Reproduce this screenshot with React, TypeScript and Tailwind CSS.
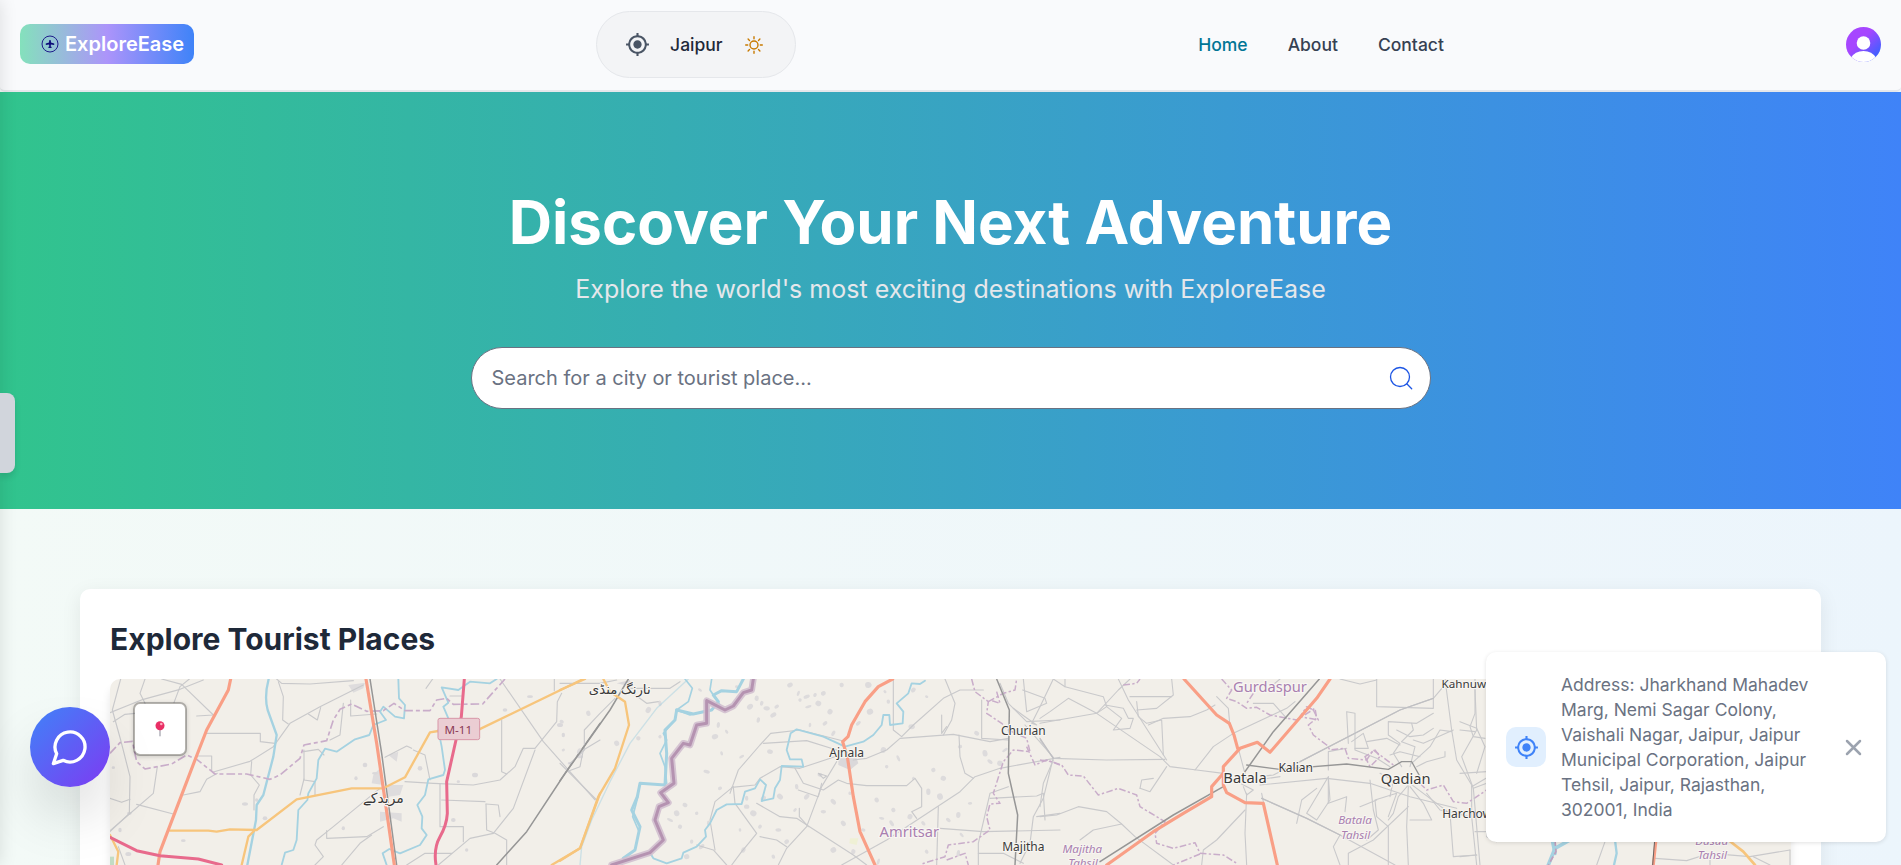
import React from "react";
import { MdMyLocation } from "react-icons/md";

type Pt = [number, number];

const MINOR = "#c9c9cb";
const ROAD = "#bfbfc2";
const WATER = "#a5d2e1";
const TRUNK = "#f99f86";
const PRIMARY = "#f7c57c";
const MOTORWAY = "#e86a8c";
const RAIL = "#969696";
const ADMIN = "#c9adca";

const westMinor = [
  "M62 27L37 120L62 210L90 320L88 430L30 485", "M30 128L130 88L240 58L310 30", "M135 27L120 70L135 100", "M185 27L245 43L340 135L290 138",
  "M268 27L240 50L222 98", "M40 155L75 133L105 130", "M316 190H481V215L525 220", "M290 258H335V303", "M340 306L450 274L520 230L570 160L660 110L790 45",
  "M530 27L545 40L630 42L760 32", "M535 35L550 80L548 150L565 162", "M625 132L652 150L662 113", "M752 90V138L830 132", "M730 100L720 195L690 210",
  "M455 275L452 315L478 345L462 375V420", "M30 385L65 397L90 388", "M30 482L85 435L160 370L172 290", "M110 403L220 432", "M250 375L300 365L320 328L352 310",
  "M610 245L655 238L672 255", "M612 240V330L645 335V375", "M612 327L600 375", "M645 585L670 560L645 525L650 510L700 470L840 355",
  "M855 262L920 228L935 235", "M940 240L975 255L990 330", "M915 335L1000 340L1120 345L1200 330L1245 290L1270 235H1305L1370 155L1372 95L1385 70",
  "M1205 150V305L1220 312", "M1305 240L1240 415L1180 490L1110 505L1015 585", "M1158 402L1160 480L1185 490L1220 510V585", "M1158 402L1195 405L1200 440",
  "M1200 27L1330 215L1485 390", "M1020 342V470L1060 470H1090V515", "M1025 390L1155 395", "M680 482V505L800 500L850 470", "M920 585L975 550H1055",
  "M1363 27V62", "M55 530L75 585", "M725 585L780 520L815 495", "M1500 210L1450 240L1440 290L1400 305",
  "M978 55L998 27", "M1050 78H1085",
];

const middleMinor = [
  "M0 40H120L170 30", "M165 85L120 130L73 180V240L30 280", "M205 55H330L360 35", "M205 60L260 100L295 95", "M0 280L110 390",
  "M510 370L535 300L600 225L632 190L720 180L850 213", "M610 220L740 212L830 240", "M515 352L585 345L600 325L660 290L720 295L840 255", "M520 352L525 400L590 490L570 515L545 545L515 585",
  "M520 350L465 395L450 450L465 540", "M705 295L730 340L790 360L835 330L860 340L920 347H1040L1065 325L1085 355V410L1055 425L1070 445", "M715 360L775 380L785 340",
  "M830 275L785 350L740 470L680 535L655 585", "M590 400L660 440L710 445L745 468L880 555L920 585", "M718 415V440L745 470", "M880 270L920 265L980 240L1020 205L1180 193L1290 215L1345 205",
  "M1000 30V180L1025 200L1060 165L1150 85L1200 60H1270", "M1155 27L1185 100L1175 150L1150 195", "M1145 135V190L1160 170", "M1265 90V205L1345 210", "M1197 195L1200 260L1215 310L1240 325",
  "M845 585L980 510L1200 365L1245 320L1320 295L1500 262", "M1135 410L1130 585", "M1140 475L1270 485L1500 480", "M1290 385L1430 378L1450 370L1455 450", "M1345 350L1290 370L1255 520V585",
  "M1320 40L1345 100L1400 155L1500 150", "M1360 115L1395 140L1430 165L1415 160L1440 110L1480 27", "M1390 27L1400 125L1460 100L1455 85L1388 60", "M1395 165L1480 262L1450 385L1420 440L1410 520L1380 580",
  "M1255 550H1330L1390 580", "M600 500L650 510L680 530", "M410 525L460 540L500 585", "M1430 440L1500 430", "M775 310L800 318L790 325Z",
];

const eastMinor = [
  "M0 160L170 130L200 110L190 80L75 50V27", "M75 50L40 27", "M170 130L85 85L30 125L0 145", "M170 130L360 260L390 290L470 300L550 310", "M170 130L235 60L270 27",
  "M235 27L265 90L380 270", "M195 105L250 115L265 145H280L270 175L220 180L245 145L200 110", "M290 120L350 115L400 75L395 27", "M270 80H395", "M290 95L295 140L320 160L365 150L370 255", "M325 165L370 145L450 140L500 120L525 105",
  "M40 265L200 270L375 268", "M40 265L0 210", "M40 270L10 340L0 410", "M300 355L330 365L380 290", "M465 300L520 230L580 190L740 115L765 95", "M570 170L565 115L530 80", "M640 100L700 100L740 145",
  "M595 235L620 330", "M660 320L700 315L780 275L1080 120L1180 85L1210 50", "M660 345L860 325L990 340L1110 380L1250 415", "M665 370L670 395", "M665 385L800 445L900 495L1065 585", "M650 330L720 320",
  "M620 370L615 490L620 585", "M615 420L530 510L490 540L485 585", "M0 440L50 435L115 410L200 425L245 462L285 500L400 585", "M245 462L160 480L120 510", "M300 355L305 330L340 325",
  "M865 320L800 430L830 450L870 390L865 320", "M830 355L785 390L770 460", "M865 325V400L920 380L915 425", "M1010 27V110L1180 115V27", "M1045 585V470L1010 440L1005 390L1070 370L1045 440",
  "M1105 350L1100 470L1105 585", "M1105 345L1075 380L1060 430L1045 450", "M1110 350L1150 400L1175 450H1110", "M1110 340L1230 430L1240 560L1310 555", "M925 585V550L1000 510L1105 410", "M900 495L880 530L900 585",
  "M1050 290L1010 265L945 240V130L920 125L925 220", "M945 235H985L970 190L935 215", "M1085 290L1060 250L1080 220L1045 195V155L1130 160L1180 130", "M1110 290L1125 230L1085 215", "M1115 280L1170 230L1200 180L1235 185", "M1130 290L1160 275L1215 260V245", "M1085 215L1120 180L1115 160", "M1050 255L1080 245L1140 260", "M1070 180L1110 200L1150 195L1180 175",
  "M1215 27L1235 180L1250 270L1295 345V440L1310 585", "M1240 180L1150 220L1120 210", "M1305 27V130L1290 170L1300 200L1335 205", "M1295 350L1380 300", "M900 27L960 42L1010 30", "M990 330L1000 420L1015 480L980 510", "M865 300V245L920 235", "M960 410L1010 390", "M1160 370L1200 420L1290 440", "M600 340L640 360L620 375L610 350",
  "M680 60L720 27", "M980 215L1040 205L1080 225", "M1020 310L1060 330L1050 380",
];

const farMinor = [
  "M45 150L50 270L5 350L40 445L60 675", "M0 245L50 265L75 320L50 400", "M0 270L45 275", "M0 400L80 395", "M40 445L80 430", "M45 575H80V590L110 605", "M0 650L50 645",
  "M435 605L410 675", "M585 655L680 662L750 640L870 650L990 630", "M750 650V675", "M990 630V675", "M880 650L930 675",
];

const smudges: Pt[] = [
  [530,50],[560,65],[590,85],[570,110],[475,165],[500,185],[595,150],[640,135],[605,100],[690,45],[715,70],[740,80],[765,75],[790,70],[775,100],[745,110],[720,90],[845,45],[810,125],[925,45],
  [975,65],[985,95],[1060,60],[1055,170],[895,160],[750,165],[795,160],[620,115],[650,110],[630,245],[545,260],[440,305],[480,355],[375,405],[350,430],[330,450],[410,430],[360,470],[380,560],
  [580,430],[540,480],[600,470],[560,410],[660,380],[655,480],[705,420],[790,425],[820,395],[780,315],[850,460],[965,445],[995,460],[910,480],[950,390],[970,240],[1015,265],[980,290],[1120,300],
  [1150,325],[1140,380],[1060,325],[1200,230],[1250,190],[1275,250],[1290,275],[1230,400],[1165,450],[1105,365],[1090,460],[1195,435],[1205,495],[1195,550],[1100,545],[880,545],[820,540],[955,575],
  [300,200],[235,205],[170,220],[60,245],[10,240],[5,155],[85,130],[265,120],[300,100],[420,60],[710,350],[740,380],[560,385],[610,385],[445,460],[425,530],[395,515],[680,515],[1320,280],[1335,240],
  [870,370],[1000,420],[1050,440],[930,125],[1100,80],[640,560],[550,540],[465,200],[820,190],[485,250],
];

const smallSmudges: Pt[] = [
  [40,293],[88,430],[85,552],[60,480],[250,512],[435,402],[768,325],[795,285],[825,310],[470,390],[495,445],[1125,315],[1075,335],[1215,120],[1380,165],[1390,195],[1410,280],[1440,260],[730,475],[960,295],[1290,80],[1100,540],[1060,450],
];

function Lines({ d, color, width, dash, opacity = 1 }: { d: string[]; color: string; width: number; dash?: string; opacity?: number }) {
  return (
    <g fill="none" stroke={color} strokeWidth={width} strokeDasharray={dash} strokeLinejoin="round" strokeLinecap={dash ? "butt" : "round"} opacity={opacity}>
      {d.map((p, i) => (
        <path key={i} d={p} />
      ))}
    </g>
  );
}

function Place({ x, y, size, children, color = "#3a3a3a", italic = false }: { x: number; y: number; size: number; children: React.ReactNode; color?: string; italic?: boolean }) {
  return (
    <text x={x} y={y} fontSize={size} fill={color} textAnchor="middle" fontStyle={italic ? "italic" : "normal"} stroke="#f8f6f2" strokeWidth={size * 0.16} strokeLinejoin="round" paintOrder="stroke">
      {children}
    </text>
  );
}

function TouristMap() {
  return (
    <svg className="block h-full w-full" viewBox="110 679 1681 186" fontFamily="'Noto Sans', 'DejaVu Sans', sans-serif">
      <rect x="110" y="679" width="1681" height="186" fill="#f2efe9" />

      <g transform="translate(100 670) scale(.33333)">
        <path d="M745 45L795 38L790 55L760 68ZM820 315L840 295L850 345L815 340ZM862 345L910 345L900 375L865 380ZM840 425L905 430V455L880 445L840 455ZM865 255L895 245L890 275Z" fill="#dedcdd" />
        <g fill="#dad8da">{smallSmudges.map(([x, y], i) => <ellipse key={i} cx={x} cy={y} rx={5 + (i % 3) * 2} ry={4 + (i % 4)} />)}</g>
        <Lines d={westMinor} color={MINOR} width={3.4} />
        <Lines color={WATER} width={7} d={["M506 27Q492 80 503 120L530 195L520 260L490 375L470 405L468 450L442 585"]} />
        <Lines color={WATER} width={5.5} d={["M895 27L897 85L915 105L912 145L885 140L850 110L840 125L858 150L820 165L808 195L765 208L710 245L675 236L655 270L650 325L625 370L622 390L595 420L590 510L580 540L555 548L545 585", "M1190 27L1170 40L1110 35L1075 60L1025 52L1045 98L1030 110L1045 145L1015 180L1025 230L1035 300L1030 315L985 328L975 375L952 405L967 440L965 475L980 495L960 525L900 550L868 537L848 550L860 585"]} />
        <Lines color={ADMIN} width={5} dash="26 9 12 9" d={["M30 250L60 218L97 214L110 275L135 297L215 282L260 255L290 268L345 312L440 312L510 328L540 315L600 265L612 225L680 212L700 150L720 118L755 102L800 124L850 122L882 100L915 122H990L1010 90L1040 85L1060 103L1148 102L1215 27"]} />
        <Lines color={RAIL} width={4.5} d={["M810 27L845 250L890 585", "M1500 160L1400 303L1280 485L1190 585"]} />
        <Lines color={PRIMARY} width={7} d={["M210 482H325L350 485L390 478L470 480L590 388L755 355H850L915 322L990 187L1015 183L1130 182L1450 27", "M465 480L445 500L425 585", "M30 495L55 545L50 585", "M1500 370L1440 535L1355 585"]} />
        <Lines color={TRUNK} width={9.5} d={["M392 27L385 60L320 180L285 270L180 545L174 585", "M798 27L830 220L855 390L883 585"]} />
        <Lines color={MOTORWAY} width={9} d={["M30 502L110 542L180 557L295 567L365 585", "M1093 27L1084 140L1068 210L1040 335L1042 430Q1040 465 1020 500T1008 585"]} />
        <rect x="1014" y="145" width="125" height="64" rx="6" fill="#ebcdd3" stroke="#d897a8" strokeWidth="3" />
        <text x="1075" y="192" fontSize="35" fill="#8a3853" textAnchor="middle">M-11</text>
        <Place x={850} y={398} size={42}>مریدکے</Place>
        <path d="M30 560H42V585H30Z" fill="#c2dcc4" />
      </g>

      <g transform="translate(560 670) scale(.33333)">
        <path d="M835 265H890L895 280L870 300L835 285Z M170 40L210 30L215 50Z" fill="#dad8da" />
        <g fill="#dddbdc">
          {smudges.map(([x, y], i) => (
            <ellipse key={i} cx={x} cy={y} rx={5 + (i % 4) * 1.6} ry={4 + (i % 5) * 1.2} transform={`rotate(${(i * 47) % 180} ${x} ${y})`} />
          ))}
        </g>
        <path d="M870 505H895L890 525L868 520Z" fill="#eff0d5" />
        <Lines d={middleMinor} color={MINOR} width={3.4} />
        <Lines color={WATER} width={4} opacity={0.5} d={["M385 27L290 115L210 220L150 335L95 450L65 530L60 585"]} />
        <Lines color={WATER} width={9} d={["M350 120L345 150L315 180L320 250L315 345L240 340L232 380L215 420L240 470L225 540L190 565", "M350 120L400 132L455 120L475 95L460 75L485 62L530 65L550 27"]} />
        <Lines color={WATER} width={5} d={["M375 27L397 55L385 95L350 120L390 135L430 125", "M455 27L450 60L480 105", "M345 150L310 190L320 210L300 250L315 290L320 340", "M235 375L218 440L235 480"]} />
        <Lines color={WATER} width={5.5} d={["M1095 32L1080 42L1055 40L1045 70L1010 100L1030 125L1028 160L990 165L988 135L970 135L965 165L940 195L910 215L855 230L790 200L710 178L692 190L680 240L690 268L725 268L730 290L665 288L660 330L645 355L640 385L605 393L618 345L600 328L585 355L555 365L545 402L500 403L470 420L450 460L435 480L438 500L410 530L370 548L365 565L320 580L280 565L270 548"]} />
        <Lines color="#d2bfcf" width={20} opacity={0.9} d={["M580 27L575 60L550 68L520 108L495 120L440 92V160L410 165L390 225L370 220L335 265L342 340L302 368L325 398L297 410L285 450L310 510L270 548L155 585"]} />
        <Lines color="#b593b1" width={9} d={["M580 27L575 60L550 68L520 108L495 120L440 92V160L410 165L390 225L370 220L335 265L342 340L302 368L325 398L297 410L285 450L310 510L270 548L155 585"]} />
        <Lines color={ADMIN} width={4.5} dash="20 7 7 7" d={["M1235 27L1245 65L1285 95L1280 130L1325 160L1345 180L1400 205L1410 245L1360 240L1330 275L1300 370L1320 400L1290 402L1280 440L1290 480L1240 515L1165 525L1155 560L1085 582", "M1285 95L1330 70L1365 60L1370 27", "M1310 65L1320 100L1290 90", "M1400 230L1425 285L1460 270L1500 285", "M1160 570L1215 550L1225 585"]} />
        <Lines color={RAIL} width={4.5} d={["M205 27L150 120L0 332", "M1310 27L1348 120L1345 310L1373 435L1365 585"]} />
        <Lines color={PRIMARY} width={7} d={["M0 60L75 27", "M130 27L150 65L195 95L207 165L165 295L115 380L60 535L0 572"]} />
        <Lines color={TRUNK} width={9.5} d={["M998 27L955 50L915 95L875 165L864 200L848 215L862 260L880 380L900 485L945 585"]} />
        <Place x={179} y={72} size={40}>نارنگ منڈی</Place>
        <Place x={860} y={262} size={36}>Ajnala</Place>
        <Place x={1390} y={195} size={36}>Churian</Place>
        <Place x={1048} y={502} size={44} color="#a97fb0">Amritsar</Place>
        <Place x={1390} y={543} size={36}>Majitha</Place>
      </g>

      <g transform="translate(1040 670) scale(.33333)">
        <Lines d={eastMinor} color={MINOR} width={3.3} />
        <Lines color={ROAD} width={3.8} d={["M40 265L0 205", "M665 385L800 445L900 495", "M780 275L1080 120L1180 85"]} />
        <Lines color={ADMIN} width={4.5} dash="20 7 7 7" d={["M0 270L35 275L65 285L85 315L130 318L175 375L235 355L290 375L300 410L375 455L345 490L350 520L400 535L465 518L480 550L550 555L590 580", "M480 552L400 585", "M545 27L575 60L560 85L590 95L620 115L650 112L690 135L770 150L825 115L830 145L805 165L820 195L860 225L870 240L915 235L925 265L980 270L1000 240L1060 285", "M250 45L290 40L300 27", "M640 70L620 100", "M820 120L835 150L780 140L800 110Z", "M975 260L990 290L1020 260L1005 240Z", "M1140 340L1160 360L1210 345L1240 395L1280 400L1340 360"]} />
        <Lines color={RAIL} width={4.5} d={["M838 27L700 185L615 305", "M550 350L400 435L180 575"]} />
        <Lines color={RAIL} width={3.8} d={["M620 285L720 298L920 282L1045 298L1085 275H1115L1140 320"]} />
        <Lines color={TRUNK} width={9.5} d={["M432 27L530 135L568 160L582 195L593 235", "M870 27L830 85L690 247L652 217L600 235L550 290V345L560 368L615 398L670 400L712 585", "M550 310L515 350V380L430 430L340 485L200 585"]} />
        <Place x={690} y={66} size={44} color="#a97fb0">Gurdaspur</Place>
        <Place x={615} y={339} size={44}>Batala</Place>
        <Place x={767} y={305} size={36}>Kalian</Place>
        <Place x={1097} y={343} size={44}>Qadian</Place>
        <Place x={1292} y={53} size={35}>Kahnuwan</Place>
        <Place x={1296} y={444} size={36}>Harchowal</Place>
        <Place x={945} y={462} size={35} color="#a97fb0" italic>Batala</Place>
        <Place x={947} y={506} size={35} color="#a97fb0" italic>Tahsil</Place>
        <Place x={127} y={548} size={35} color="#a97fb0" italic>Majitha</Place>
        <Place x={129} y={590} size={35} color="#a97fb0" italic>Tahsil</Place>
      </g>

      <g transform="translate(1460 640) scale(.33333)">
        <Lines d={farMinor} color={MINOR} width={3.4} />
        <Lines color={WATER} width={11} d={["M330 600L285 625L265 675", "M278 605L285 640"]} />
        <Lines color={WATER} width={7} d={["M465 600L470 640L462 675"]} />
        <Lines color="#bfa0bd" width={5} dash="18 8" d={["M285 600L288 635L265 675"]} />
        <Lines color={TRUNK} width={9} d={["M588 600L580 675"]} />
        <Lines color="#666" width={3} d={["M584 600L578 675"]} />
        <Lines color={PRIMARY} width={8} d={["M805 600L850 635L885 675"]} />
        <Place x={755} y={614} size={35} color="#a97fb0" italic>Dasua</Place>
        <Place x={757} y={658} size={35} color="#a97fb0" italic>Tahsil</Place>
      </g>
    </svg>
  );
}

function PinControl() {
  return (
    <button className="absolute top-[23px] left-[23px] flex h-[54px] w-[54px] items-center justify-center rounded-[7px] border-2 border-black/25 bg-white bg-clip-padding shadow-[0_1px_4px_rgba(0,0,0,0.15)]">
      <svg className="-mt-px h-4 w-[10px]" viewBox="0 0 10 16">
        <path d="M5 8V15.3" stroke="#8b8b98" strokeWidth="1" />
        <circle cx="5" cy="4.8" r="4.5" fill="#e92f65" />
        <circle cx="6.3" cy="3" r="1.3" fill="#ffa9be" />
      </svg>
    </button>
  );
}

function Header() {
  return (
    <header className="flex h-[92px] items-center justify-between rounded-b-[5px] border-b-2 border-gray-200 bg-[#f9fafc] px-5">
      <a className="-mt-[3px] flex h-10 w-[174px] items-center rounded-[10px] bg-linear-to-r/srgb from-[#84e1bc] via-[#ac94fa] to-[#3f83f8] pl-[21px]">
        <svg className="h-[18px] w-[18px] shrink-0" viewBox="0 0 18 18">
          <circle cx="9" cy="9" r="8" fill="none" stroke="#1e1b8b" strokeWidth="1" />
          <path d="M9 5c.6 0 .9.6.9 1.300v1.100l3.300 1.200v1.300l-3.300-.3-.2 1.800 1 .6v.7L9 12.900l-1.700-.2v-.7l1-.6-.2-1.800-3.300.3V8.600l3.300-1.200V6.300C8.100 5.600 8.400 5 9 5z" fill="#0b0b78" />
        </svg>
        <span className="ml-[6px] text-[20px] leading-7 font-semibold text-white">ExploreEase</span>
      </a>

      <div className="-mt-px flex h-[67px] w-[200px] items-center rounded-full border border-gray-200 bg-gray-100 pl-7">
        <MdMyLocation className="h-[25px] w-[25px] text-gray-600" />
        <span className="mt-px ml-5 w-[54px] text-[17.5px] font-medium text-gray-800">Jaipur</span>
        <svg className="ml-[21px] h-[18px] w-[18px]" viewBox="0 0 18 18" fill="none" stroke="#c87a00" strokeWidth="1.4" strokeLinecap="round">
          <circle cx="9" cy="9" r="4" />
          <path d="M9 .7v2M9 15.300v2M.7 9h2M15.300 9h2M3.100 3.100l1.400 1.400M13.500 13.500l1.400 1.400M3.100 14.900l1.400-1.400M13.500 4.500l1.400-1.400" />
        </svg>
      </div>

      <nav className="-mt-[2px] flex gap-10 text-[17.5px] leading-[25px] font-medium text-gray-700">
        <a className="text-cyan-700">Home</a>
        <a>About</a>
        <a>Contact</a>
      </nav>

      <svg className="-mt-px h-[35px] w-[35px]" viewBox="0 0 35 35">
        <defs>
          <linearGradient id="avatar" x1="0" y1="0" x2="1" y2="1">
            <stop offset=".4" stopColor="#a646ff" />
            <stop offset=".85" stopColor="#3f5fff" />
          </linearGradient>
          <clipPath id="avatarClip"><circle cx="17.500" cy="17.500" r="17.500" /></clipPath>
        </defs>
        <g clipPath="url(#avatarClip)">
          <rect width="35" height="35" fill="url(#avatar)" />
          <circle cx="17.500" cy="16" r="6.800" fill="#fff" />
          <path d="M4.700 31Q9 24 17.500 24T30.300 31V35H4.700Z" fill="#fff" />
        </g>
      </svg>
    </header>
  );
}

function Hero() {
  return (
    <section className="flex h-[417px] flex-col items-center bg-linear-to-r/srgb from-[#31c48d] to-[#3f83f8] pt-[100px]">
      <h1 className="text-[60px] leading-[60px] font-bold text-white">Discover Your Next Adventure</h1>
      <p className="mt-5 text-[25px] leading-[35px] text-gray-200">Explore the world's most exciting destinations with ExploreEase</p>
      <div className="mt-10 flex h-[62px] w-[960px] items-center justify-between rounded-full border border-gray-500 bg-white pr-[17px] pl-5">
        <span className="text-[20px] leading-[30px] text-gray-500">Search for a city or tourist place...</span>
        <svg className="h-6 w-6" viewBox="0 0 24 24" fill="none" stroke="#1c55e4" strokeWidth="1.300" strokeLinecap="round">
          <circle cx="11" cy="11" r="9.500" />
          <path d="M18 18L22.700 22.700" />
        </svg>
      </div>
    </section>
  );
}

function AddressToast() {
  return (
    <div className="absolute top-[652px] left-[1486px] flex w-[400px] items-center rounded-[10px] bg-white p-5 text-gray-500 shadow-[0_1px_4px_rgba(0,0,0,0.12)]">
      <div className="flex h-10 w-10 shrink-0 items-center justify-center rounded-[10px] bg-[#e1effe]">
        <MdMyLocation className="h-[25px] w-[25px] text-[#3f83f8]" />
      </div>
      <p className="ml-[15px] w-[255px] text-[17.5px] leading-[25px]">
        Address: Jharkhand Mahadev Marg, Nemi Sagar Colony, Vaishali Nagar, Jaipur, Jaipur Municipal Corporation, Jaipur Tehsil, Jaipur, Rajasthan, 302001, India
      </p>
      <svg className="ml-[29px] h-[17px] w-[17px]" viewBox="0 0 17 17" fill="none" stroke="#9ca3af" strokeWidth="2.500" strokeLinecap="round">
        <path d="M2 2L15 15M15 2L2 15" />
      </svg>
    </div>
  );
}

function ChatButton() {
  return (
    <button className="absolute top-[707px] left-[30px] flex h-20 w-20 items-center justify-center rounded-full bg-linear-to-br/srgb from-[#3f83f8] to-[#7e3af2] shadow-[0_31px_62px_-15px_rgba(0,0,0,0.3)]">
      <svg className="h-10 w-10" viewBox="0 0 24 24" fill="none" stroke="#fff" strokeWidth="2" strokeLinecap="round" strokeLinejoin="round">
        <path d="M7.900 20A9 9 0 1 0 4 16.100L2 22Z" />
      </svg>
    </button>
  );
}

export default function App() {
  return (
    <div className="relative h-[865px] w-full overflow-hidden bg-linear-to-r/srgb from-[#f3faf7] to-[#ecf5fc] font-[Inter,sans-serif]">
      <Header />
      <Hero />
      <main className="px-20 pt-20">
        <section className="h-[400px] rounded-[10px] bg-white p-[30px] shadow-[0_5px_20px_rgba(0,0,0,0.08)]">
          <h2 className="text-[30px] leading-10 font-bold text-gray-800">Explore Tourist Places</h2>
          <div className="relative mt-5 h-[186px] overflow-hidden rounded-t-[10px] shadow-[0_8px_8px_rgba(0,0,0,0.1)]">
            <TouristMap />
            <PinControl />
          </div>
        </section>
      </main>
      <div className="absolute top-0 -left-5 h-full w-5 shadow-[0_0_18px_rgba(0,0,0,0.12)]" />
      <div className="absolute top-[393px] left-0 h-20 w-[15px] rounded-r-[8px] bg-gray-300 shadow-[0_4px_6px_rgba(0,0,0,0.1)]" />
      <ChatButton />
      <AddressToast />
    </div>
  );
}
